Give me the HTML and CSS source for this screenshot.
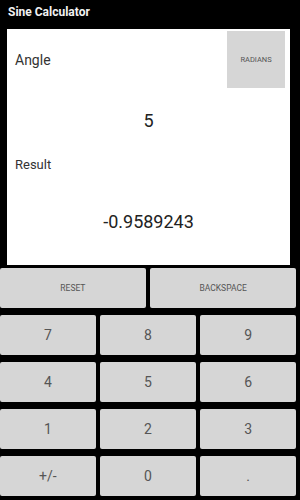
FILE: index.html
```html
<!DOCTYPE html>
<html lang="en">

<head>
    <meta charset="UTF-8">
    <title>Sine Calculator</title>
    <link rel="stylesheet" href="styles.css">
</head>

<body>
    <div class="title">Sine Calculator</div>
    <div class="panel">
        <div class="angle-row">
            <span class="label">Angle</span>
            <div class="mode">RADIANS</div>
        </div>
        <div class="value" id="angle">5</div>
        <div class="label result-label">Result</div>
        <div class="value result" id="result">-0.9589243</div>
    </div>
    <div class="keypad">
        <div class="row two">
            <div class="key small">RESET</div>
            <div class="key small">BACKSPACE</div>
        </div>
        <div class="row">
            <div class="key">7</div>
            <div class="key">8</div>
            <div class="key">9</div>
        </div>
        <div class="row">
            <div class="key">4</div>
            <div class="key">5</div>
            <div class="key">6</div>
        </div>
        <div class="row">
            <div class="key">1</div>
            <div class="key">2</div>
            <div class="key">3</div>
        </div>
        <div class="row">
            <div class="key">+/-</div>
            <div class="key">0</div>
            <div class="key">.</div>
        </div>
    </div>
</body>

</html>
```

FILE: styles.css
```css
body {
    margin: 0;
    padding: 0;
    background-color: #000;
    font-family: Roboto, "Liberation Sans", sans-serif;
    width: 300px;
    height: 500px;
    overflow: hidden;
}

.title {
    height: 25px;
    line-height: 25px;
    padding-left: 8px;
    color: #f2f2f2;
    font-size: 12px;
    font-weight: bold;
}

.panel {
    margin: 4px 10px 0 7px;
    height: 236px;
    background-color: #fff;
    color: #222;
}

.angle-row {
    display: flex;
    justify-content: space-between;
    align-items: center;
    height: 59px;
    padding: 0 5px 0 8px;
}

.label {
    font-size: 14px;
    color: #333;
}

.angle-row .label {
    padding-top: 3px;
}

.mode {
    width: 58px;
    height: 57px;
    margin-top: 1px;
    background-color: #d6d6d6;
    color: #555;
    font-size: 7.5px;
    display: flex;
    align-items: center;
    justify-content: center;
}

.value {
    height: 64px;
    display: flex;
    align-items: center;
    justify-content: center;
    font-size: 18px;
    color: #222;
}

.result-label {
    height: 24px;
    line-height: 25px;
    padding-left: 8px;
    font-size: 13px;
}

.result {
    height: 89px;
    padding-top: 1px;
}

.keypad {
    margin-top: 3px;
    padding-right: 4px;
    display: flex;
    flex-direction: column;
    gap: 7px;
}

.row {
    display: grid;
    grid-template-columns: 1fr 1fr 1fr;
    gap: 4.5px;
}

.row.two {
    grid-template-columns: 1fr 1fr;
}

.key {
    height: 40px;
    background-color: #d6d6d6;
    border-radius: 2px;
    color: #555;
    font-size: 14px;
    display: flex;
    align-items: center;
    justify-content: center;
}

.key.small {
    font-size: 8.5px;
}
```
